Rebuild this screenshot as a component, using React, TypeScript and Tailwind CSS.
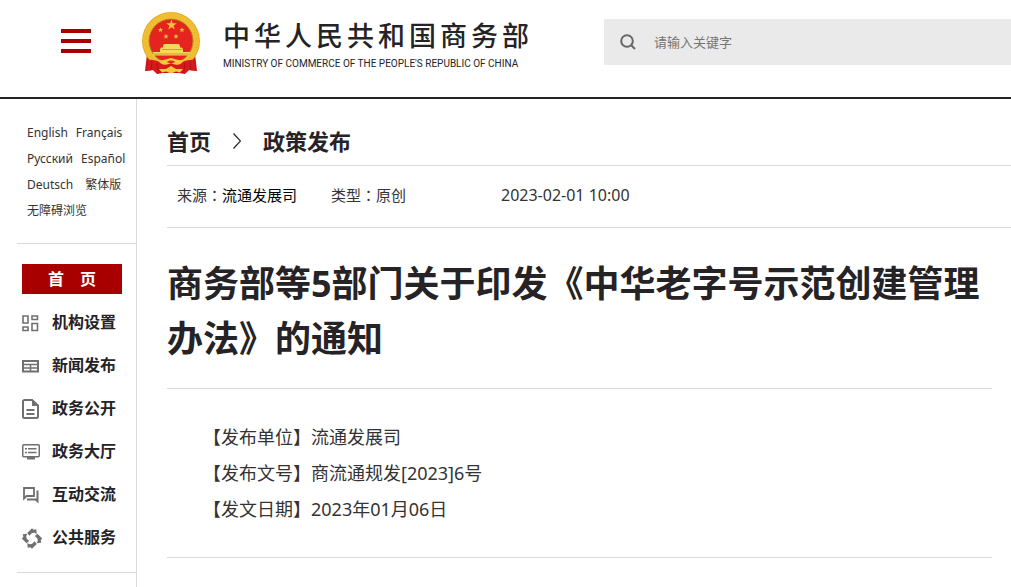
import type { ReactNode } from "react";

const languageRows = [
  ["English", "Français"],
  ["Русский", "Español"],
  ["Deutsch", "繁体版"],
  ["无障碍浏览"],
];

const rowGaps = ["gap-2", "gap-2", "gap-3", "gap-2"];

const navItems: { label: string; icon: ReactNode }[] = [
  {
    label: "机构设置",
    icon: (
      <g fill="none" stroke="currentColor" strokeWidth="1.6">
        <path d="M3 3h5v7H3zM12 3h5.500v3.500H12zM3 14h5v3.500H3zM12 10.500h5.500v7H12z" />
      </g>
    ),
  },
  {
    label: "新闻发布",
    icon: (
      <g fill="none" stroke="currentColor">
        <path strokeWidth="2" d="M3 5h15v10.500H3z" />
        <path strokeWidth="1.5" d="M3 8.500h15M3 12h15M10.500 8v7" />
      </g>
    ),
  },
  {
    label: "政务公开",
    icon: (
      <g fill="none" stroke="currentColor" strokeWidth="2">
        <path strokeLinejoin="round" d="M12 1H4.500A1.500 1.500 0 0 0 3 2.500v15a1.500 1.500 0 0 0 1.500 1.500h12a1.500 1.500 0 0 0 1.500-1.500V6.500z" />
        <path d="M6.500 11h8M6.500 15h8" />
        <path fill="currentColor" stroke="none" d="M12 0l7 7h-7z" />
      </g>
    ),
  },
  {
    label: "政务大厅",
    icon: (
      <g fill="none" stroke="currentColor">
        <rect x="2.750" y="2.750" width="16.500" height="12" rx="1" strokeWidth="1.500" />
        <path strokeWidth="1.500" d="M5 6.750h2M8 6.750h8.500M5 10.500h2M8 10.500h8.500" />
        <path strokeWidth="3" d="M7 16h8" />
      </g>
    ),
  },
  {
    label: "互动交流",
    icon: (
      <g fill="none" stroke="currentColor" strokeWidth="1.800">
        <path d="M4 3h10v8H6.500L4 13.500z" />
        <path fill="currentColor" stroke="none" d="M7 13.500h9.500v-8h2v13L15.200 15.500H7z" />
      </g>
    ),
  },
  {
    label: "公共服务",
    icon: (
      <g fill="currentColor">
        {[0, 90, 180, 270].map((angle) => (
          <path
            key={angle}
            transform={`translate(1 -.5) rotate(${angle} 11 11)`}
            d="M6.200 5.500L11 .8l1.500 1.500 2.800-.5.400 4.600-2.200-1.200-2.500.4L8.500 8.200z"
          />
        ))}
      </g>
    ),
  },
];

function Star({ x, y, r }: { x: number; y: number; r: number }) {
  return (
    <path
      transform={`translate(${x} ${y}) scale(${r})`}
      d="M0-1L.23-.32.95-.31.38.12.59.81 0 .4-.59.81-.38.12-.95-.31-.23-.32z"
    />
  );
}

function Emblem() {
  return (
    <svg viewBox="0 0 60 64" className="h-16 w-15 shrink-0" role="img" aria-label="国徽">
      <path fill="#c9121a" d="M6 43L4 60l8-1 4 4 6-1h16l6 1 4-4 8 1-2-17z" />
      <circle cx="30" cy="30" r="29" fill="#e5ab22" />
      <circle cx="30" cy="30" r="28" fill="#f2c034" />
      <circle cx="30" cy="30" r="25.500" fill="none" stroke="#e0a01c" strokeWidth="3" strokeDasharray="1 2" opacity=".35" />
      <circle cx="30" cy="30" r="22" fill="#e5231f" stroke="#b88416" strokeWidth="1" />
      <g fill="#f3c13a">
        <Star x={30.5} y={14} r={5.5} />
        <Star x={19.5} y={19} r={2.8} />
        <Star x={41} y={19} r={2.8} />
        <Star x={25} y={25.5} r={2.8} />
        <Star x={35} y={25.5} r={2.8} />
      </g>
      <path fill="#f8d85a" d="M22 35l1-2h15l1 2v1.500h2l1 2V41h7v3.500H12V41h7v-2.500l1-2h2z" />
      <path stroke="#d28b17" strokeWidth=".8" d="M21 38.500h20M12 43h37" />
      <path fill="#d8191c" d="M7 49c7-1 10 2 16 3h14c6-1 9-4 16-3l2 11-7-1-4 3-6-3H22l-6 3-4-3-7 1z" />
      <path fill="#f6c93a" d="M17 49c5 1 8-1 13-2 5 1 8 3 13 2-2 5-8 6-13 3-5 3-11 2-13-3z" />
      <path fill="#f6c93a" d="M18 58l7 0 5-3 5 3 7 0-3 3.500-4-1-5 2-5-2-4 1z" />
      <path fill="none" stroke="#a01016" strokeWidth=".8" d="M11 51l-1 8M49 51l1 8M16 52l1 8M44 52l-1 8" />
      <path fill="#e5231f" d="M26 51c2-2 6-2 8 0-2 1.500-6 1.500-8 0z" />
    </svg>
  );
}

function Header() {
  return (
    <header className="flex items-start border-b-2 border-[#252326] pb-[22px] pl-[61px]">
      <button type="button" aria-label="菜单" className="mt-[29px] flex w-[30px] shrink-0 flex-col gap-1.5">
        <span className="h-1 bg-[#a80000]" />
        <span className="h-1 bg-[#a80000]" />
        <span className="h-1 bg-[#a80000]" />
      </button>
      <a href="#" className="mt-[11px] ml-[50px] flex w-[388px] shrink-0 gap-[22px] text-[#252326]">
        <Emblem />
        <span className="flex flex-col pt-[7px]">
          <span className="flex gap-1 text-[27px] leading-9 font-medium">
            {[..."中华人民共和国商务部"].map((char) => (
              <span key={char}>{char}</span>
            ))}
          </span>
          <span className="mt-1 font-['Roboto',sans-serif] text-[10px] leading-3 whitespace-nowrap">
            MINISTRY OF COMMERCE OF THE PEOPLE'S REPUBLIC OF CHINA
          </span>
        </span>
      </a>
      <label className="mt-[19px] ml-[75px] flex h-[46px] flex-1 items-center gap-[18px] bg-[#eaeaea] pl-4 text-[#666]">
        <svg viewBox="0 0 16 16" className="size-4 shrink-0" fill="none" stroke="currentColor" strokeWidth="2">
          <circle cx="7" cy="7" r="5.800" />
          <path d="M11 11l4 4" />
        </svg>
        <input
          type="text"
          aria-label="请输入关键字"
          placeholder="请输入关键字"
          className="w-full min-w-0 bg-transparent pt-0.5 text-[13px] outline-none placeholder:text-[#757575]"
        />
      </label>
    </header>
  );
}

function Sidebar() {
  return (
    <aside className="w-[137px] shrink-0 border-r border-[#d9d9d9] pl-[17px]">
      <div className="border-b border-[#d9d9d9] pt-[21px] pb-[19px] pl-2.5 text-xs leading-[26px] text-[#333]">
        {languageRows.map((row, i) => (
          <div key={row[0]} className={`flex whitespace-nowrap ${rowGaps[i]}`}>
            {row.map((name) => (
              <a key={name} href="#">{name}</a>
            ))}
          </div>
        ))}
      </div>
      <nav className="border-b border-[#d9d9d9] pt-5 pb-5 pl-[5px] text-base font-bold text-[#252326]">
        <a href="#" className="flex h-[30px] w-[100px] items-center justify-center gap-4 bg-[#a80000] text-white">
          <span>首</span>
          <span>页</span>
        </a>
        {navItems.map((item) => (
          <a key={item.label} href="#" className="flex h-[43px] items-center gap-2 pt-4 leading-6">
            <svg viewBox="0 0 22 22" className="-ml-0.5 size-[22px] shrink-0 overflow-visible text-[#707070]">
              {item.icon}
            </svg>
            <span className="pb-[3px] pl-0.5">{item.label}</span>
          </a>
        ))}
      </nav>
    </aside>
  );
}

function Article() {
  return (
    <main className="min-w-0 flex-1 pl-[30px] text-[#252326]">
      <div className="flex items-center gap-[22px] border-b border-[#d9d9d9] pt-[26px] pb-2 text-[22px] leading-8 font-bold">
        <a href="#">首页</a>
        <svg viewBox="0 0 8 16" className="h-4 w-2 shrink-0" fill="none" stroke="currentColor" strokeWidth="1.200">
          <path d="M.5.5L7.500 8l-7 7.500" />
        </svg>
        <a href="#">政策发布</a>
      </div>
      <div className="flex items-baseline border-b border-[#d9d9d9] pt-4 pb-[19px] pl-2.5 text-[15px] leading-[25px] text-[#333]">
        <span className="w-[154px]">
          来源<span className="font-['Noto_Sans_CJK_TC',sans-serif]">：</span>
          <span className="text-black">流通发展司</span>
        </span>
        <span className="w-[170px]">
          类型<span className="font-['Noto_Sans_CJK_TC',sans-serif]">：</span>原创
        </span>
        <time className="text-base leading-[25px]">2023-02-01 10:00</time>
      </div>
      <div className="pr-[19px]">
        <h1 className="border-b border-[#d9d9d9] pt-7 pb-[22px] text-4xl leading-[55px] font-bold">
          商务部等5部门关于印发《中华老字号示范创建管理办法》的通知
        </h1>
        <div className="border-b border-[#d9d9d9] pt-[30px] pb-[30px] pl-9 text-lg leading-9 text-[#333]">
          <p>【发布单位】流通发展司</p>
          <p>【发布文号】商流通规发[2023]6号</p>
          <p>【发文日期】2023年01月06日</p>
        </div>
      </div>
    </main>
  );
}

export default function App() {
  return (
    <div className="flex min-h-screen flex-col bg-white font-['Noto_Sans','Noto_Sans_CJK_SC',sans-serif]">
      <Header />
      <div className="flex flex-1">
        <Sidebar />
        <Article />
      </div>
    </div>
  );
}
